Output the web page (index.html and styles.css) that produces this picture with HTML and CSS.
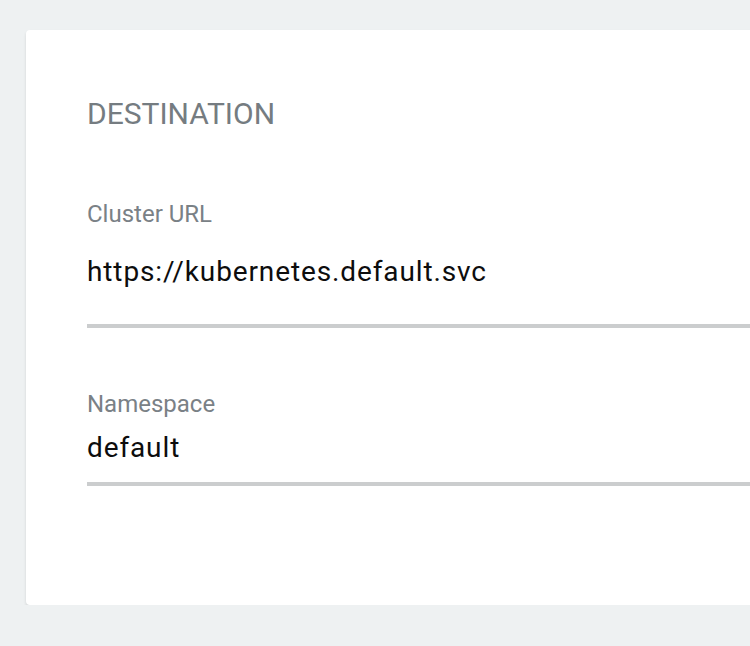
FILE: index.html
```html
<!DOCTYPE html>
<html lang="en">
<head>
<meta charset="utf-8">
<title>Destination</title>
<link rel="stylesheet" href="styles.css">
</head>
<body>
<div class="page">
  <section class="card">
    <h2 class="card__title">DESTINATION</h2>
    <div class="field field--url">
      <label class="field__label">Cluster URL</label>
      <div class="field__value">https://kubernetes.default.svc</div>
    </div>
    <div class="field field--ns">
      <label class="field__label">Namespace</label>
      <div class="field__value">default</div>
    </div>
  </section>
</div>
</body>
</html>
```
FILE: styles.css
```css
html, body {
  margin: 0;
  padding: 0;
  background: #eef1f2;
  overflow: hidden;
  width: 750px;
  height: 646px;
}
.page {
  padding: 30px 0 0 26px;
  font-family: Roboto, "Liberation Sans", sans-serif;
  width: 724px;
  overflow: hidden;
}
.card {
  width: 800px;
  height: 575px;
  box-sizing: border-box;
  background: #fff;
  border-radius: 4px;
  box-shadow: 0 2px 3px rgba(0, 0, 0, 0.12);
  padding: 66px 0 0 61px;
}
.card__title {
  margin: 0;
  font-size: 30px;
  line-height: 36px;
  font-weight: 400;
  color: #757c81;
}
.field {
  width: 700px;
  border-bottom: 4px solid #cbcdce;
}
.field--url {
  margin-top: 68px;
  padding-bottom: 36px;
}
.field--ns {
  margin-top: 62px;
  padding-bottom: 18px;
}
.field__label {
  display: block;
  font-size: 24px;
  line-height: 28px;
  color: #7a8186;
}
.field__value {
  font-size: 28px;
  line-height: 32px;
  letter-spacing: 0.88px;
  color: #0d0d0d;
}
.field--url .field__value { margin-top: 28px; }
.field--ns .field__value { margin-top: 14px; }
```
